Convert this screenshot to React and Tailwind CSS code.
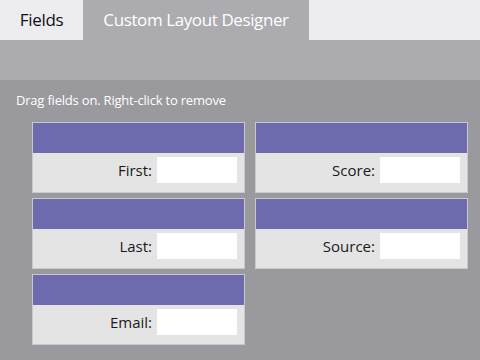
const fields = [
  { label: "First:" },
  { label: "Score:" },
  { label: "Last:" },
  { label: "Source:" },
  { label: "Email:" },
];

const FieldCard = ({ label }) => (
  <div className="flex flex-col h-[71px] border border-[#c9c9cd]">
    <div className="h-[30px] bg-[#6e6aae]" />
    <div className="flex-1 bg-[#e4e4e4] flex items-start justify-end gap-[5px] pr-[7px] pt-[4px]">
      <span className="text-[15px] leading-[26px] text-[#1a1a1a]">{label}</span>
      <div className="w-[80px] h-[26px] bg-white" />
    </div>
  </div>
);

const App = () => {
  return (
    <div
      className="w-[480px] h-[360px] flex flex-col overflow-hidden"
      style={{ fontFamily: "'Open Sans', 'Noto Sans', sans-serif" }}
    >
      {/* Tabs */}
      <div className="flex h-10 shrink-0">
        <div className="w-[83px] bg-[#ececf1] flex items-center justify-center text-[17px] tracking-[-0.3px] text-[#111]">
          Fields
        </div>
        <div className="w-[226px] bg-[#acabb0] flex items-center justify-center text-[17px] tracking-[-0.4px] text-white">
          Custom Layout Designer
        </div>
        <div className="flex-1 bg-[#ececf1]" />
      </div>
      <div className="h-10 shrink-0 bg-[#acabb0]" />

      {/* Designer area */}
      <div className="flex-1 bg-[#9a999e] pt-[11px]">
        <div className="pl-4 text-[13px] leading-[18px] tracking-[-0.2px] text-white">
          Drag fields on. Right-click to remove
        </div>
        <div className="grid grid-cols-[213px_213px] gap-x-[10px] gap-y-[5px] ml-8 mt-[13px]">
          {fields.map((f) => (
            <FieldCard key={f.label} label={f.label} />
          ))}
        </div>
      </div>
    </div>
  );
};

export default App;
